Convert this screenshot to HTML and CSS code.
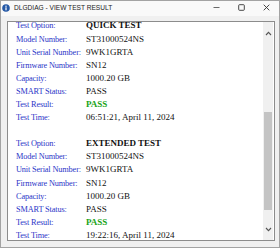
FILE: index.html
```html
<!DOCTYPE html>
<html lang="en">
<head>
  <meta charset="UTF-8" />
  <title>DLGDIAG - VIEW TEST RESULT</title>
  <link rel="stylesheet" href="styles.css">
</head>
<body>

<div class="window">
  <div class="titlebar">
    <svg class="app-icon" width="8" height="8" viewBox="0 0 8 8">
      <circle cx="4" cy="4" r="3.8" fill="#2458a6"/>
      <circle cx="4" cy="2.2" r="0.7" fill="#fff"/>
      <rect x="3.4" y="3.3" width="1.2" height="3" fill="#fff"/>
    </svg>
    <span class="title">DLGDIAG - VIEW TEST RESULT</span>
    <div class="controls">
      <span class="ctl">
        <svg width="7" height="7" viewBox="0 0 7 7"><line x1="0.5" y1="3.5" x2="6.5" y2="3.5" stroke="#444" stroke-width="0.8"/></svg>
      </span>
      <span class="ctl">
        <svg width="7" height="7" viewBox="0 0 7 7"><rect x="0.7" y="0.7" width="5.6" height="5.6" rx="0.8" fill="none" stroke="#333" stroke-width="0.9"/></svg>
      </span>
      <span class="ctl">
        <svg width="7" height="7" viewBox="0 0 7 7"><path d="M0.7 0.7 L6.3 6.3 M6.3 0.7 L0.7 6.3" stroke="#333" stroke-width="0.9"/></svg>
      </span>
    </div>
  </div>

  <div class="client">
    <div class="panel">
      <div class="report">
        <dl class="block">
          <dt>Test Option:</dt><dd class="strong">QUICK TEST</dd>
          <dt>Model Number:</dt><dd>ST31000524NS</dd>
          <dt>Unit Serial Number:</dt><dd>9WK1GRTA</dd>
          <dt>Firmware Number:</dt><dd>SN12</dd>
          <dt>Capacity:</dt><dd>1000.20 GB</dd>
          <dt>SMART Status:</dt><dd>PASS</dd>
          <dt>Test Result:</dt><dd class="pass">PASS</dd>
          <dt>Test Time:</dt><dd>06:51:21, April 11, 2024</dd>
        </dl>
        <dl class="block">
          <dt>Test Option:</dt><dd class="strong">EXTENDED TEST</dd>
          <dt>Model Number:</dt><dd>ST31000524NS</dd>
          <dt>Unit Serial Number:</dt><dd>9WK1GRTA</dd>
          <dt>Firmware Number:</dt><dd>SN12</dd>
          <dt>Capacity:</dt><dd>1000.20 GB</dd>
          <dt>SMART Status:</dt><dd>PASS</dd>
          <dt>Test Result:</dt><dd class="pass">PASS</dd>
          <dt>Test Time:</dt><dd>19:22:16, April 11, 2024</dd>
        </dl>
      </div>

      <div class="scrollbar">
        <div class="sb-btn">
          <svg width="7" height="5" viewBox="0 0 7 5"><polyline points="1,4 3.5,1.4 6,4" fill="none" stroke="#555" stroke-width="1.1"/></svg>
        </div>
        <div class="sb-track"><div class="sb-thumb"></div></div>
        <div class="sb-btn">
          <svg width="7" height="5" viewBox="0 0 7 5"><polyline points="1,1 3.5,3.6 6,1" fill="none" stroke="#555" stroke-width="1.1"/></svg>
        </div>
      </div>
    </div>
  </div>
</div>

</body>
</html>
```

FILE: styles.css
```css
body {
  margin: 0;
  font-family: "Liberation Serif", serif;
  background: #f0f0f0;
}
.window {
  width: 280px;
  height: 248px;
  box-sizing: border-box;
  border: 1px solid #a3a3a3;
  background: #f0f0f0;
  display: flex;
  flex-direction: column;
  overflow: hidden;
}
.titlebar {
  flex: none;
  height: 15px;
  box-sizing: border-box;
  padding: 0 0 2px 1px;
  background: #f9f9f9;
  display: flex;
  align-items: center;
}
.app-icon {
  margin-right: 4px;
}
.title {
  font-family: "Liberation Sans", sans-serif;
  font-size: 6.6px;
  color: #222;
}
.controls {
  margin-left: auto;
  display: flex;
}
.ctl {
  width: 25px;
  height: 13px;
  display: flex;
  align-items: center;
  justify-content: center;
}
.client {
  flex: 1;
  display: flex;
  padding: 5px 4px 6px 6px;
  min-height: 0;
}
.panel {
  flex: 1;
  display: flex;
  border: 1px solid #8c8c8c;
  background: #fff;
  overflow: hidden;
}
.report {
  flex: 1;
  padding-left: 8px;
  margin-top: -2.6px;
}
.block {
  display: grid;
  grid-template-columns: 70px auto;
  margin: 0;
  line-height: 13.1px;
}
.block + .block {
  margin-top: 13.1px;
}
.block dt {
  color: #2b35c8;
  font-size: 8.3px;
  letter-spacing: -0.15px;
  white-space: nowrap;
}
.block dd {
  margin: 0;
  font-size: 9px;
  color: #111;
  white-space: nowrap;
}
.strong {
  font-weight: bold;
}
.block dd.pass {
  color: #17a317;
  font-weight: bold;
}
.scrollbar {
  flex: none;
  width: 10px;
  margin-right: 1px;
  background: #f0f0f0;
  display: flex;
  flex-direction: column;
}
.sb-btn {
  height: 22px;
  display: flex;
  align-items: center;
  justify-content: center;
}
.sb-track {
  flex: 1;
}
.sb-thumb {
  margin: 68px 1px 0;
  height: 98px;
  background: #c4c4c4;
}
```
